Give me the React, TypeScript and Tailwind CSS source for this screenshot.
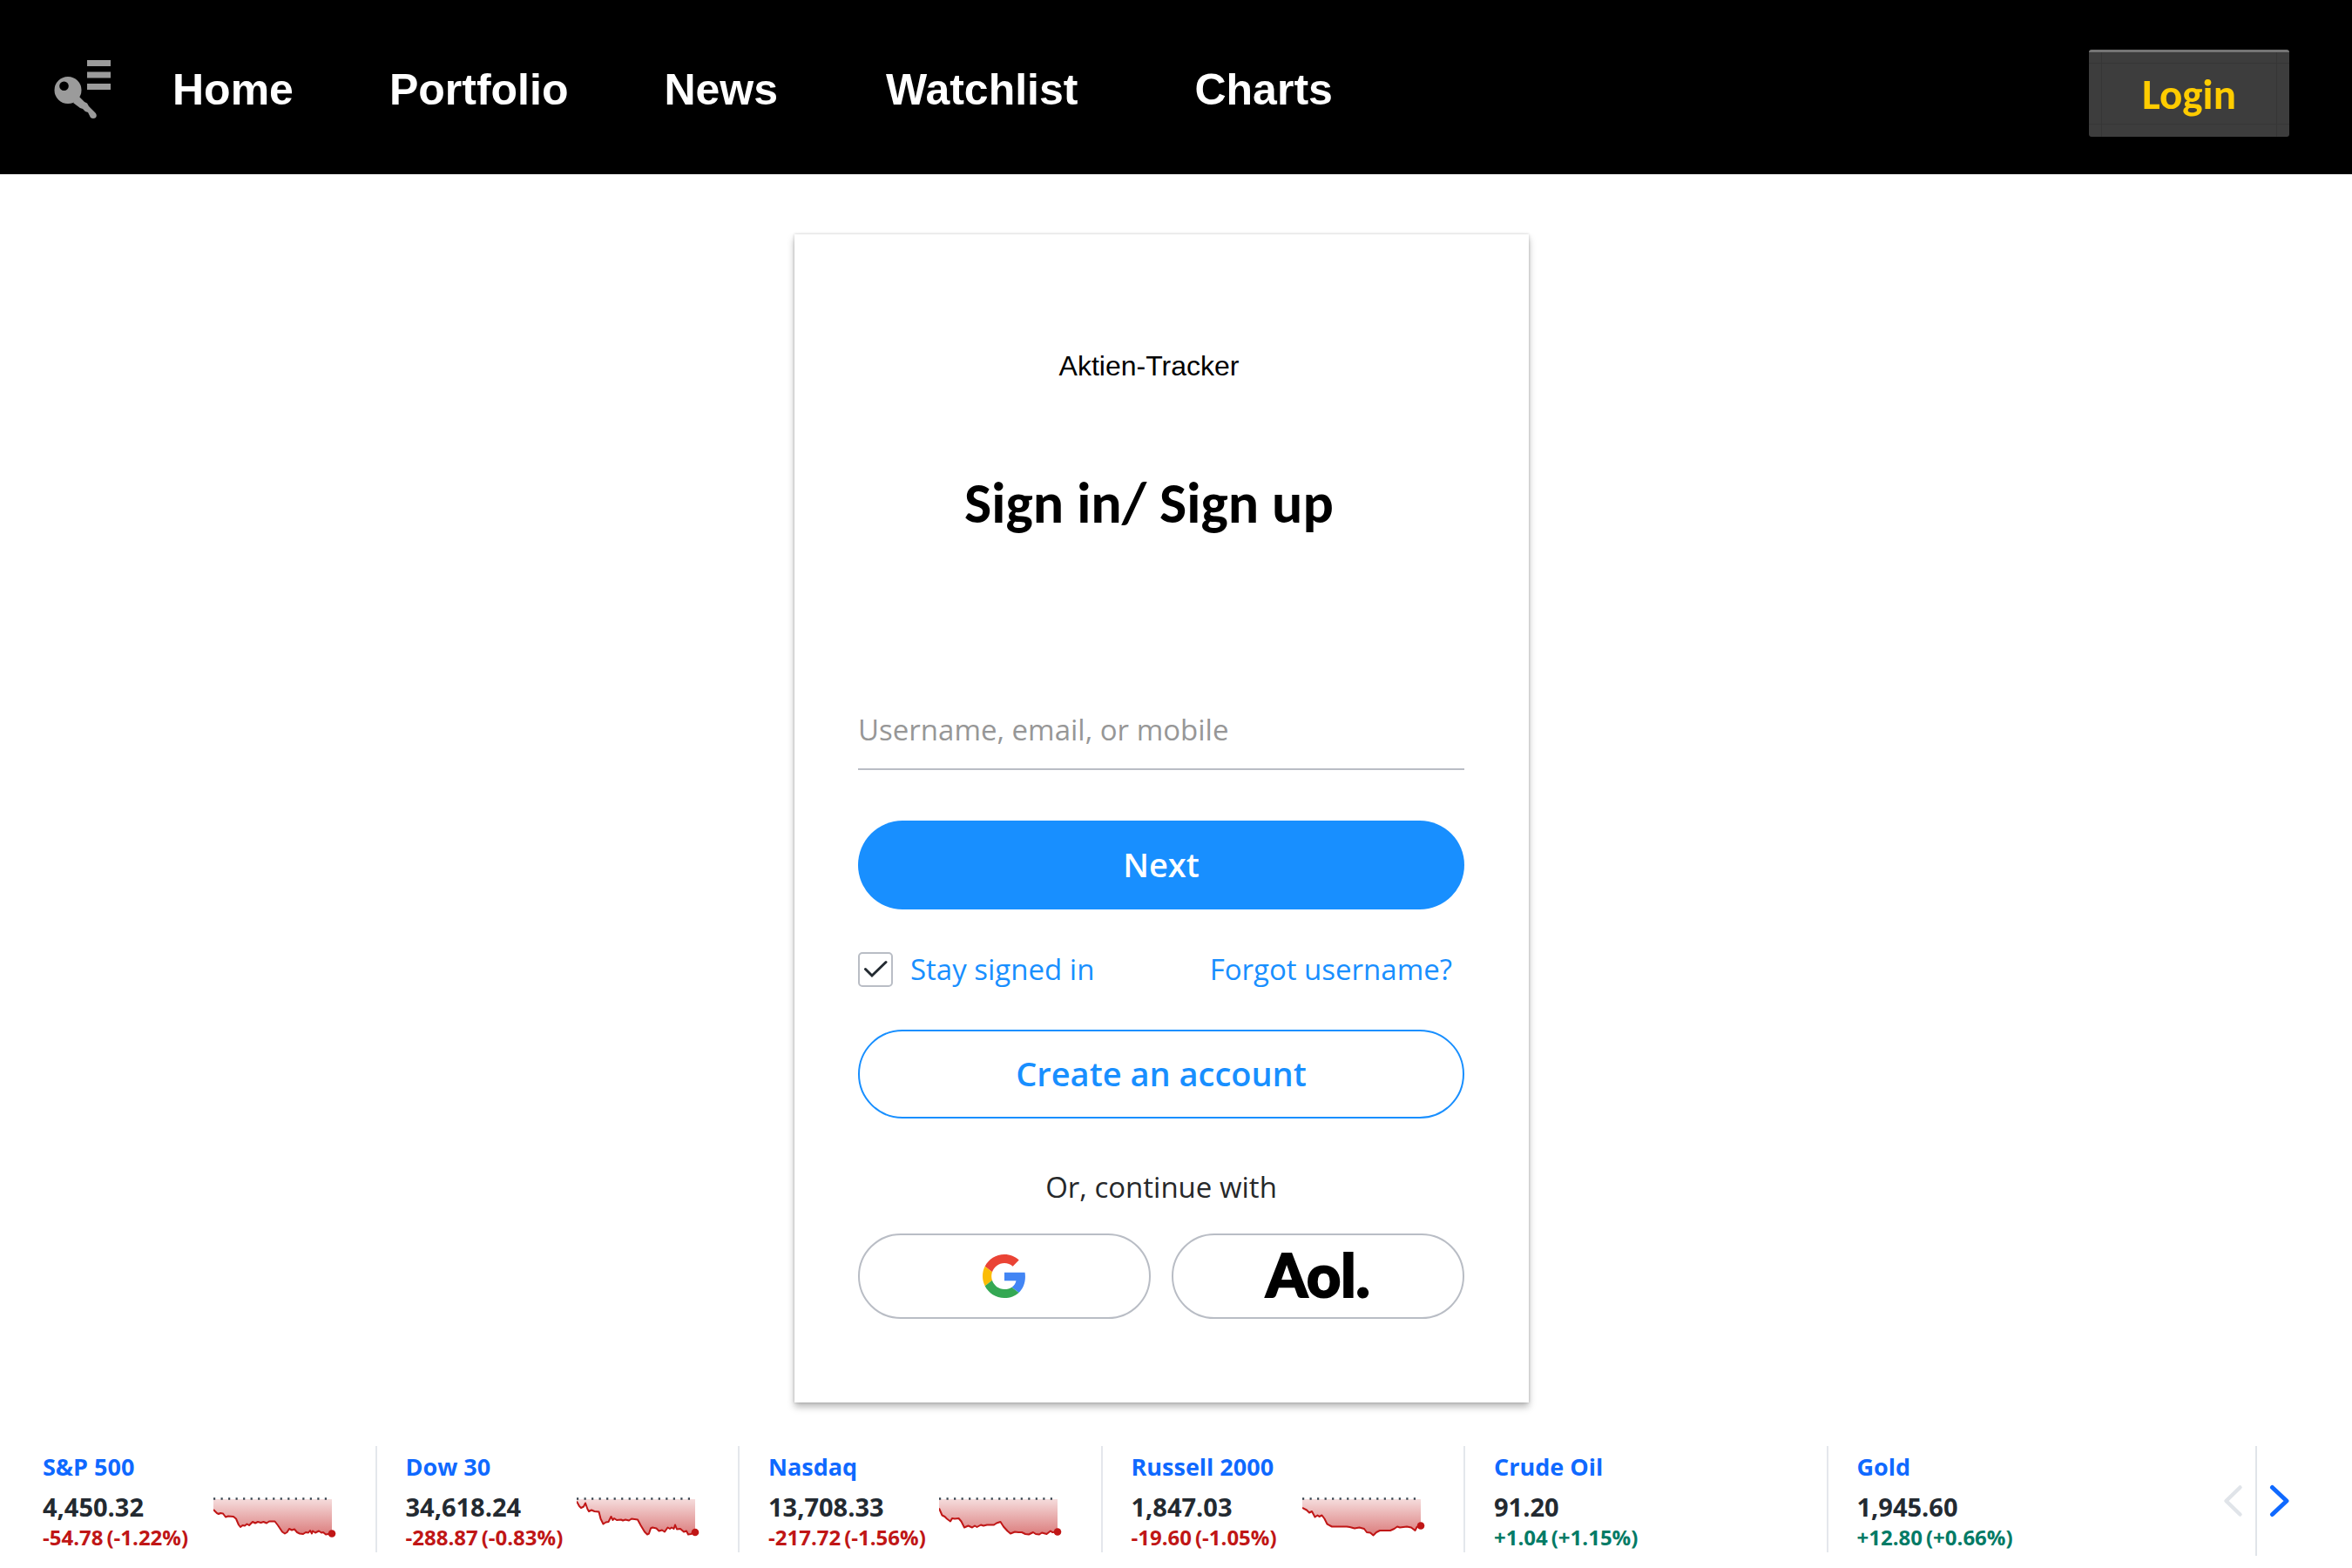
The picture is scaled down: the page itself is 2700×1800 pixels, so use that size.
import React from "react";

type Quote = {
  name: string;
  price: string;
  change: string;
  percent: string;
  up?: boolean;
  points?: string;
  end?: [number, number];
};

const quotes: Quote[] = [
  {
    name: "S&P 500",
    price: "4,450.32",
    change: "-54.78",
    percent: "(-1.22%)",
    end: [136, 51.5],
    points:
      "0,24 4,28 6,29 8,28 11,28.5 14,32.5 17,31.5 23,32 26,34.5 29,41.5 31,44 33.5,42 36,42.5 38.5,40.5 41,42 45,38 48,39.5 51,38 54.5,39 57.5,38 61,39.5 64,37.5 70.5,37.5 74,42 79,49.5 82,51.5 84.5,50 87,46 90,47.5 93,46.5 96,50 99,51.5 103,52 106,50 109,50.5 111,48 113,51.5 114,48.5 117,50.5 121,48.5 124,50.5 126,50 129,52.5 132,52 136,51.5",
  },
  {
    name: "Dow 30",
    price: "34,618.24",
    change: "-288.87",
    percent: "(-0.83%)",
    end: [136, 50],
    points:
      "0,14.5 3,20 5,22 8,20.5 10,16.5 12.5,23.5 14,26 17,24.5 20.5,26 25.5,26.5 27.5,34.5 30.5,40.5 33.5,38.5 36.5,38 39.5,32 41.5,36 43,34 46,36 51,35.5 53,36.5 56,35.5 60,36.5 63,34.5 70,35.5 73.5,42 78,49.5 81,52.5 83,51.5 85,45.5 87,44.5 91.5,45.5 94.5,48.5 98,47.5 101,49.5 104.5,44.5 107,46 109,44.5 111.5,46 113,41.5 115,46.5 119,46 123,49.5 126,48.5 128,52.5 131,52 136,50",
  },
  {
    name: "Nasdaq",
    price: "13,708.33",
    change: "-217.72",
    percent: "(-1.56%)",
    end: [136, 49.5],
    points:
      "0,22.5 3.5,30.5 6.5,32 9,34.5 13,37.5 15,34 18,34.5 22.5,34 25.5,37.5 29,44.5 33.5,42.5 38,44.5 41,42.5 43.5,44 48,41.5 51,42.5 55,41.5 63,41.5 66,39.5 70.5,38 74,43.5 78.5,48.5 82,51.5 87,49.5 91,50 95,50 99,52 103,52.5 108,50 111,52 115,52.5 118,50.5 123.5,52 128,48.5 130,50 136,49.5",
  },
  {
    name: "Russell 2000",
    price: "1,847.03",
    change: "-19.60",
    percent: "(-1.05%)",
    end: [136, 42.5],
    points:
      "0,22 5,24.5 8,27.5 11,26 14.5,32.5 17.5,30.5 19.5,32 22.5,30.5 25.5,34.5 28.5,40.5 34,43.5 40,43.5 51,43.5 54.5,44 60,45.5 65.5,44.5 71,46 74,50 78,50.5 81.5,53.5 85,50 89,48 101,48 105.5,46 109,43.5 112,44.5 120,43.5 125,44.5 129.5,48 131.5,44 136,42.5",
  },
  { name: "Crude Oil", price: "91.20", change: "+1.04", percent: "(+1.15%)", up: true },
  { name: "Gold", price: "1,945.60", change: "+12.80", percent: "(+0.66%)", up: true },
];

function KeyIcon() {
  return (
    <svg width="68" height="84" viewBox="0 2 68 84" aria-hidden="true" className="shrink-0">
      <g fill="#9b9b9b">
        <path
          fillRule="evenodd"
          d="M18 29a15.500 15.500 0 1 0 0 31a15.500 15.500 0 1 0 0-31zM13.500 34.500a5.300 5.300 0 1 1 0 10.600a5.300 5.300 0 1 1 0-10.600z"
        />
        <path d="M24 59L31 52L37 58L40 59.500L42 63L49 70Q52 73 50 76Q47 78 44 76L41 70L38 69L35 66L32 65Z" />
        <rect x="40" y="10" width="27" height="7" />
        <rect x="40" y="23.500" width="27" height="7" />
        <rect x="40" y="37" width="27" height="7" />
      </g>
    </svg>
  );
}

function GoogleIcon() {
  return (
    <svg width="50" height="50" viewBox="0 0 48 48" aria-hidden="true">
      <path fill="#EA4335" d="M24 9.500c3.540 0 6.710 1.220 9.210 3.600l6.850-6.850C35.900 2.380 30.470 0 24 0 14.620 0 6.510 5.380 2.560 13.220l7.980 6.190C12.430 13.720 17.740 9.500 24 9.500z" />
      <path fill="#4285F4" d="M46.980 24.550c0-1.570-.15-3.090-.38-4.550H24v9.020h12.940c-.58 2.960-2.260 5.480-4.780 7.180l7.730 6c4.510-4.180 7.090-10.360 7.090-17.650z" />
      <path fill="#FBBC05" d="M10.530 28.590c-.48-1.450-.76-2.990-.76-4.590s.27-3.140.76-4.590l-7.980-6.190C.92 16.460 0 20.120 0 24c0 3.880.92 7.540 2.560 10.780l7.970-6.190z" />
      <path fill="#34A853" d="M24 48c6.480 0 11.930-2.130 15.890-5.810l-7.730-6c-2.150 1.450-4.920 2.300-8.160 2.300-6.260 0-11.570-4.220-13.470-9.910l-7.980 6.190C6.510 42.620 14.620 48 24 48z" />
    </svg>
  );
}

function Sparkline({ id, points, end }: { id: string; points: string; end: [number, number] }) {
  return (
    <svg width="142" height="57" viewBox="0 3 142 57" aria-hidden="true" className="shrink-0">
      <defs>
        <linearGradient id={id} x1="0" y1="12" x2="0" y2="52" gradientUnits="userSpaceOnUse">
          <stop offset="0" stopColor="#f5dcdc" />
          <stop offset="1" stopColor="#dc7f7f" />
        </linearGradient>
      </defs>
      <polygon points={`0,12 ${points} 136,12`} fill={`url(#${id})`} />
      <path d="M0 11.500H131" stroke="#3a4650" strokeWidth="2.500" strokeDasharray="2.200 6.320" />
      <polyline points={points} fill="none" stroke="#c01616" strokeWidth="2" strokeLinejoin="round" />
      <circle cx={end[0]} cy={end[1]} r="4.300" fill="#c01616" />
    </svg>
  );
}

function QuoteCard({ quote, index }: { quote: Quote; index: number }) {
  const last = index === quotes.length - 1;
  return (
    <li
      className={`h-[122px] flex-1 pl-[33px] pt-1.5 ${last ? "" : "border-r-2 border-[#e4e7ec]"}`}
    >
      <a href="#" className="block text-[27px] leading-9 font-bold text-[#0f69ff]">
        {quote.name}
      </a>
      <div className="mt-2.5 flex">
        <div className="w-[196px] shrink-0 whitespace-nowrap font-bold">
          <div className="text-[29px] leading-9 text-[#232a31]">{quote.price}</div>
          <div
            className={`flex gap-1 text-[24px] leading-[34px] ${quote.up ? "text-[#037b66]" : "text-[#c01616]"}`}
          >
            <span>{quote.change}</span>
            <span>{quote.percent}</span>
          </div>
        </div>
        {quote.points && quote.end && (
          <Sparkline id={`spark-${index}`} points={quote.points} end={quote.end} />
        )}
      </div>
    </li>
  );
}

export default function App() {
  return (
    <div className="min-h-screen bg-white font-['Open_Sans',sans-serif]">
      <header className="flex items-center bg-black pt-[57px] pb-[43px] pl-[60px] pr-[72px]">
        <a href="#" aria-label="Key list" className="pb-2">
          <KeyIcon />
        </a>
        <nav className="flex gap-[110px] pb-2 pl-[70px] font-['Liberation_Sans',sans-serif] text-[50px] leading-[60px] font-bold text-white">
          <a href="#">Home</a>
          <a href="#">Portfolio</a>
          <a href="#">News</a>
          <a href="#" className="ml-3.5">Watchlist</a>
          <a href="#" className="ml-6">Charts</a>
        </nav>
        <button
          type="button"
          className="relative ml-auto h-[100px] w-[230px] rounded-[3px] border-t-[3px] border-[#757575] bg-[#3d3d3d] pb-0.5 font-['Carlito','Lato',sans-serif] text-[49px] leading-[60px] font-bold text-[#ffcc00]"
        >
          <span className="absolute inset-x-0 top-3 bottom-3.5 border-y border-[#363636]" />
          <span className="absolute inset-x-3.5 inset-y-0 border-x border-[#363636]" />
          <span className="relative">Login</span>
        </button>
      </header>

      <main className="flex justify-center pt-[69px] pr-[33px]">
        <form className="w-[843px] bg-white pl-[73px] pr-[74px] pt-[131px] pb-24 shadow-[0_5px_8px_rgba(0,0,0,0.28),0_0_3px_rgba(0,0,0,0.2)]">
          <div className="pr-7 text-center text-black">
            <p className="font-['Liberation_Sans',sans-serif] text-[32px] leading-10">Aktien-Tracker</p>
            <h1 className="mt-[98px] font-['Carlito','Lato',sans-serif] text-[66px] leading-[80px] font-bold">
              Sign in/ Sign up
            </h1>
          </div>
          <input
            type="text"
            aria-label="Username, email, or mobile"
            placeholder="Username, email, or mobile"
            className="mt-[186px] block h-20 w-full border-b-2 border-[#b9bdc5] pb-3 text-[33px] outline-none placeholder:text-[#979797]"
          />
          <button
            type="button"
            className="mt-[58px] block h-[102px] w-full rounded-full bg-[#188fff] pb-0.5 text-[38px] font-semibold text-white"
          >
            Next
          </button>
          <div className="mt-[47px] flex items-center justify-between pr-3.5 text-[33px] leading-[44px] text-[#188fff]">
            <label className="flex items-center gap-5">
              <span className="relative size-10">
                <input
                  type="checkbox"
                  defaultChecked
                  className="peer block size-10 appearance-none rounded-[5px] border-2 border-[#b9bdc5] bg-white"
                />
                <svg
                  viewBox="0 0 40 40"
                  aria-hidden="true"
                  className="pointer-events-none absolute inset-0 hidden size-10 peer-checked:block"
                >
                  <path d="M8.500 19.500L16 27L32 11.500" fill="none" stroke="#232a31" strokeWidth="3" strokeLinecap="round" />
                </svg>
              </span>
              Stay signed in
            </label>
            <a href="#">Forgot username?</a>
          </div>
          <button
            type="button"
            className="mt-[47px] block h-[102px] w-full rounded-full border-2 border-[#188fff] pb-0.5 text-[38px] font-semibold text-[#188fff]"
          >
            Create an account
          </button>
          <p className="mt-[57px] text-center text-[33px] leading-[44px] text-[#26282a]">Or, continue with</p>
          <div className="mt-[31px] grid grid-cols-2 gap-6">
            <button
              type="button"
              aria-label="Google"
              className="flex h-[98px] items-center justify-center rounded-full border-2 border-[#b9bdc5]"
            >
              <GoogleIcon />
            </button>
            <button
              type="button"
              className="flex h-[98px] items-center justify-center rounded-full border-2 border-[#b9bdc5] pb-1 font-['Lato',sans-serif] text-[68px] leading-[80px] font-black text-black [-webkit-text-stroke:2px_black]"
            >
              Aol.
            </button>
          </div>
        </form>
      </main>

      <footer className="mt-[50px] flex pl-4">
        <ul className="flex flex-1">
          {quotes.map((quote, i) => (
            <QuoteCard key={quote.name} quote={quote} index={i} />
          ))}
        </ul>
        <div className="flex h-[126px] w-[187px] shrink-0">
          <button type="button" aria-label="Previous" className="flex w-[78px] items-center justify-end border-r-2 border-[#e0e4e9] pr-3.5">
            <svg width="24" height="38" viewBox="0 0 24 38" aria-hidden="true">
              <path d="M20.500 3.500L4.500 19L20.500 34.500" fill="none" stroke="#e0e4e9" strokeWidth="4.500" strokeLinecap="round" strokeLinejoin="round" />
            </svg>
          </button>
          <button type="button" aria-label="Next quotes" className="flex items-center pl-3.5">
            <svg width="24" height="38" viewBox="0 0 24 38" aria-hidden="true">
              <path d="M3.500 3.500L20 19L3.500 34.500" fill="none" stroke="#0f69ff" strokeWidth="5" strokeLinecap="round" strokeLinejoin="round" />
            </svg>
          </button>
        </div>
      </footer>
    </div>
  );
}
